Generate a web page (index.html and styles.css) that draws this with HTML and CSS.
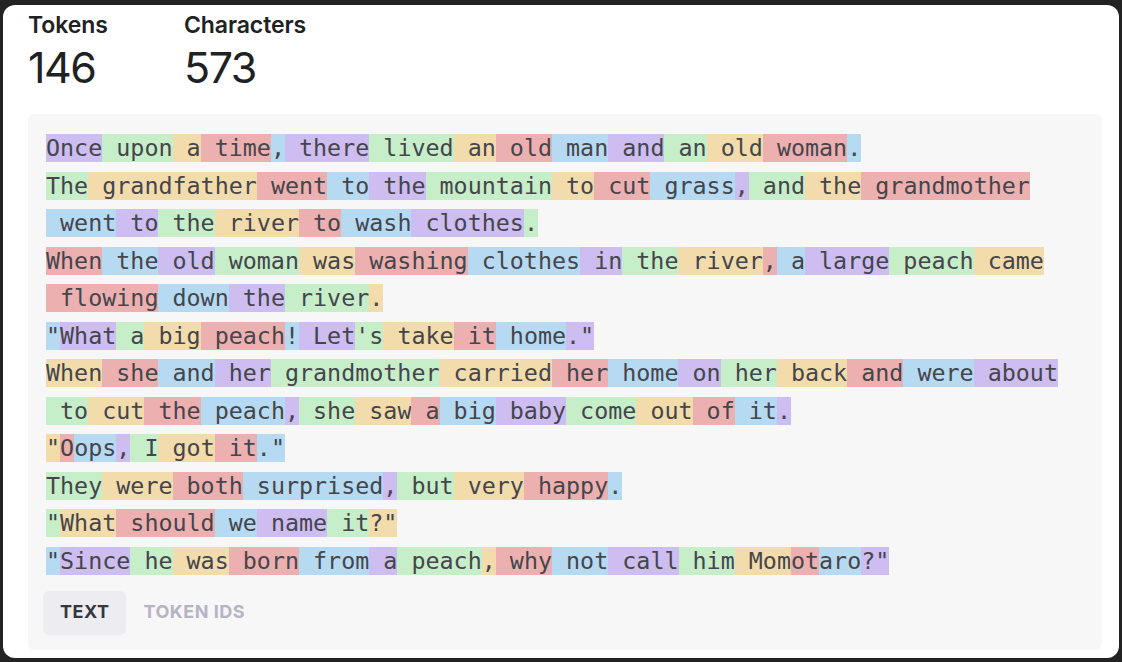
FILE: index.html
```html
<!DOCTYPE html>
<html lang="en">
<head>
<meta charset="utf-8">
<title>Tokenizer</title>
<link rel="stylesheet" href="styles.css">
</head>
<body>
<div class="frame">
  <div class="card">
    <div class="stats">
      <div class="stat stat-tokens">
        <div class="stat-label">Tokens</div>
        <div class="stat-value">146</div>
      </div>
      <div class="stat">
        <div class="stat-label">Characters</div>
        <div class="stat-value">573</div>
      </div>
    </div>
    <div class="panel">
      <div class="tokens">
        <div class="para"><span class="t c0">Once</span><span class="t c1"> upon</span><span class="t c2"> a</span><span class="t c3"> time</span><span class="t c4">,</span><span class="t c0"> there</span><span class="t c1"> lived</span><span class="t c2"> an</span><span class="t c3"> old</span><span class="t c4"> man</span><span class="t c0"> and</span><span class="t c1"> an</span><span class="t c2"> old</span><span class="t c3"> woman</span><span class="t c4">.</span></div>
        <div class="para"><span class="t c1">The</span><span class="t c2"> grandfather</span><span class="t c3"> went</span><span class="t c4"> to</span><span class="t c0"> the</span><span class="t c1"> mountain</span><span class="t c2"> to</span><span class="t c3"> cut</span><span class="t c4"> grass</span><span class="t c0">,</span><span class="t c1"> and</span><span class="t c2"> the</span><span class="t c3"> grandmother</span><span class="t c4"> went</span><span class="t c0"> to</span><span class="t c1"> the</span><span class="t c2"> river</span><span class="t c3"> to</span><span class="t c4"> wash</span><span class="t c0"> clothes</span><span class="t c1">.</span></div>
        <div class="para"><span class="t c3">When</span><span class="t c4"> the</span><span class="t c0"> old</span><span class="t c1"> woman</span><span class="t c2"> was</span><span class="t c3"> washing</span><span class="t c4"> clothes</span><span class="t c0"> in</span><span class="t c1"> the</span><span class="t c2"> river</span><span class="t c3">,</span><span class="t c4"> a</span><span class="t c0"> large</span><span class="t c1"> peach</span><span class="t c2"> came</span><span class="t c3"> flowing</span><span class="t c4"> down</span><span class="t c0"> the</span><span class="t c1"> river</span><span class="t c2">.</span></div>
        <div class="para"><span class="t c4">"</span><span class="t c0">What</span><span class="t c1"> a</span><span class="t c2"> big</span><span class="t c3"> peach</span><span class="t c4">!</span><span class="t c0"> Let</span><span class="t c1">'s</span><span class="t c2"> take</span><span class="t c3"> it</span><span class="t c4"> home</span><span class="t c0">."</span></div>
        <div class="para"><span class="t c2">When</span><span class="t c3"> she</span><span class="t c4"> and</span><span class="t c0"> her</span><span class="t c1"> grandmother</span><span class="t c2"> carried</span><span class="t c3"> her</span><span class="t c4"> home</span><span class="t c0"> on</span><span class="t c1"> her</span><span class="t c2"> back</span><span class="t c3"> and</span><span class="t c4"> were</span><span class="t c0"> about</span><span class="t c1"> to</span><span class="t c2"> cut</span><span class="t c3"> the</span><span class="t c4"> peach</span><span class="t c0">,</span><span class="t c1"> she</span><span class="t c2"> saw</span><span class="t c3"> a</span><span class="t c4"> big</span><span class="t c0"> baby</span><span class="t c1"> come</span><span class="t c2"> out</span><span class="t c3"> of</span><span class="t c4"> it</span><span class="t c0">.</span></div>
        <div class="para"><span class="t c2">"</span><span class="t c3">O</span><span class="t c4">ops</span><span class="t c0">,</span><span class="t c1"> I</span><span class="t c2"> got</span><span class="t c3"> it</span><span class="t c4">."</span></div>
        <div class="para"><span class="t c1">They</span><span class="t c2"> were</span><span class="t c3"> both</span><span class="t c4"> surprised</span><span class="t c0">,</span><span class="t c1"> but</span><span class="t c2"> very</span><span class="t c3"> happy</span><span class="t c4">.</span></div>
        <div class="para"><span class="t c1">"</span><span class="t c2">What</span><span class="t c3"> should</span><span class="t c4"> we</span><span class="t c0"> name</span><span class="t c1"> it</span><span class="t c2">?"</span></div>
        <div class="para"><span class="t c4">"</span><span class="t c0">Since</span><span class="t c1"> he</span><span class="t c2"> was</span><span class="t c3"> born</span><span class="t c4"> from</span><span class="t c0"> a</span><span class="t c1"> peach</span><span class="t c2">,</span><span class="t c3"> why</span><span class="t c4"> not</span><span class="t c0"> call</span><span class="t c1"> him</span><span class="t c2"> Mom</span><span class="t c3">ot</span><span class="t c4">aro</span><span class="t c0">?"</span></div>
      </div>
      <div class="tabs">
        <button class="tab tab-active">TEXT</button>
        <button class="tab">TOKEN IDS</button>
      </div>
    </div>
  </div>
</div>
</body>
</html>
```
FILE: styles.css
```css
html, body {
  margin: 0;
  padding: 0;
  background: #232323;
}
body {
  width: 1122px;
  height: 662px;
  overflow: hidden;
  font-family: Inter, "Noto Sans", sans-serif;
}
.frame {
  padding: 5px 3px 4px 3px;
  height: 662px;
  box-sizing: border-box;
}
.card {
  background: #ffffff;
  border-radius: 12px;
  height: 653px;
  box-sizing: border-box;
  padding: 5px 17px 8px 25px;
  display: flex;
  flex-direction: column;
}
.stats {
  display: flex;
  color: #202123;
}
.stat-tokens {
  width: 156px;
}
.stat-label {
  font-size: 23px;
  font-weight: 600;
  line-height: 30px;
  letter-spacing: -0.1px;
}
.stat-value {
  font-size: 43px;
  font-weight: 400;
  line-height: 54px;
  letter-spacing: -1.5px;
}
.panel {
  margin-top: 20px;
  background: #f7f7f8;
  border-radius: 6px;
  flex: 1;
  padding: 20px 15px 15px 15px;
  display: flex;
  flex-direction: column;
}
.tokens {
  margin: 0 3px;
  display: flex;
  flex-direction: column;
  gap: 9.5px;
  font-family: "DejaVu Sans Mono", "Liberation Mono", monospace;
  font-size: 23.35px;
  color: #45454c;
}
.para {
  display: flex;
  flex-wrap: wrap;
  row-gap: 9.5px;
}
.t {
  white-space: pre;
  height: 28px;
  line-height: 29px;
}
.c0 { background: #cdbdf0; }
.c1 { background: #c6eec9; }
.c2 { background: #f3dcab; }
.c3 { background: #edb0b0; }
.c4 { background: #b6daf2; }
.tabs {
  margin-top: 16.5px;
  display: flex;
}
.tab {
  border: 0;
  background: transparent;
  font-family: Inter, "Noto Sans", sans-serif;
  font-size: 18px;
  font-weight: 700;
  height: 44px;
  padding: 0 18px 3px 18px;
  border-radius: 6px;
  color: #b4b4c4;
  letter-spacing: 0.5px;
}
.tab-active {
  background: #ececf1;
  color: #353740;
  padding: 0 16px 3px 17px;
}
```
